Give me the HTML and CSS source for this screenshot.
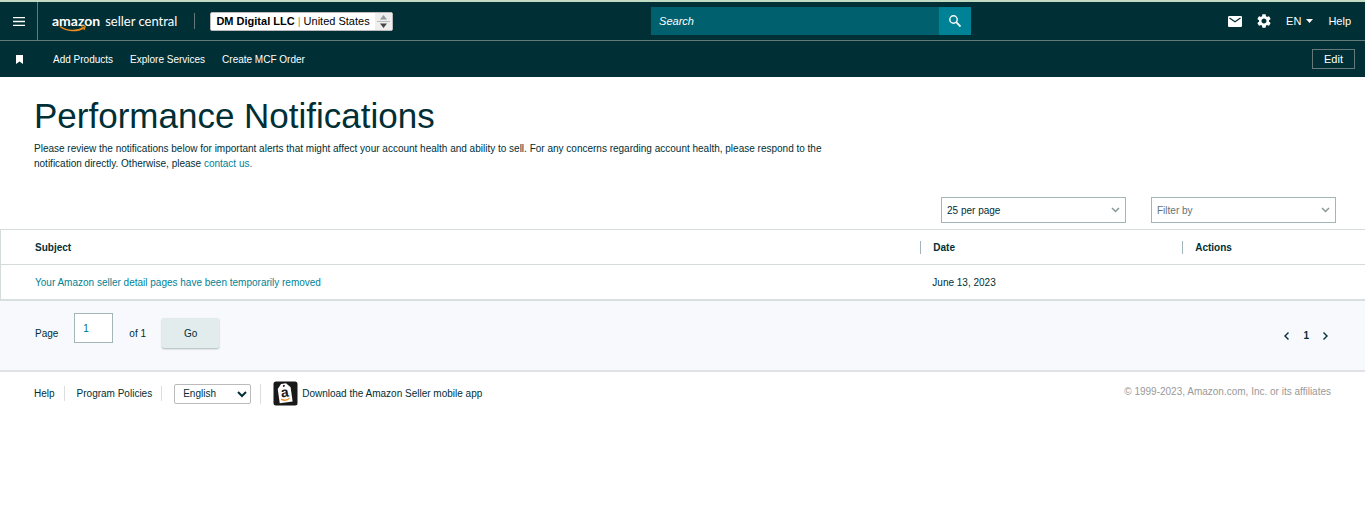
FILE: index.html
```html
<!DOCTYPE html>
<html lang="en">
<head>
  <meta charset="UTF-8">
  <title>Performance Notifications</title>
  <meta name="viewport" content="width=device-width, initial-scale=1.0">
  <link rel="stylesheet" href="styles.css">
</head>
<body>
  <header>
    <div class="topbar">
      <button class="menu-btn" aria-label="Menu">
        <svg width="12" height="9" viewBox="0 0 12 9"><path d="M0 .5h12M0 4.500h12M0 8.500h12" stroke="#fff" stroke-width="1.400"/></svg>
      </button>
      <a class="logo" href="#">
        <b>amazon</b><span>seller central</span>
        <svg class="smile" width="28" height="7" viewBox="0 0 28 7" fill="none" stroke="#f08c1c"><path d="M1 1.500C8 6.500 18 7 25 2.500" stroke-width="1.500"/><path d="M22 1.200c3-.8 4.500-.5 4 .8l-1 3" stroke-width="1.200"/></svg>
      </a>
      <button class="account">
        <span class="account-name"><b>DM Digital LLC</b> <i>|</i> United States</span>
        <span class="account-arrows">
          <svg width="13" height="13" viewBox="0 0 13 13"><path d="M3 4.500 6.500 0 10 4.500z" fill="#999"/><path d="M0 6.500h13" stroke="#bbb"/><path d="M3 8.500h7L6.500 13z" fill="#444"/></svg>
        </span>
      </button>
      <form class="search">
        <input type="text" placeholder="Search" aria-label="Search">
        <button type="button" aria-label="Search">
          <svg width="12" height="12" viewBox="0 0 12 12" fill="none" stroke="#fff"><circle cx="4.500" cy="4.500" r="3.700" stroke-width="1.400"/><path d="M7.200 7.200l4.300 4.300" stroke-width="1.800"/></svg>
        </button>
      </form>
      <nav class="tools">
        <a href="#" aria-label="Messages"><svg width="14" height="11" viewBox="0 0 14 11"><rect width="14" height="11" rx="1.200" fill="#fff"/><path d="M1.500 2 7 5.700 12.500 2" fill="none" stroke="#002f36" stroke-width="1.300"/></svg></a>
        <a href="#" aria-label="Settings"><svg width="14" height="14" viewBox="2 2 20 20"><path fill="#fff" d="M19.140 12.940c.04-.3.060-.61.060-.94 0-.32-.02-.64-.07-.94l2.030-1.580c.18-.14.230-.41.120-.61l-1.920-3.320c-.12-.22-.37-.29-.59-.22l-2.390.96c-.5-.38-1.030-.7-1.620-.94l-.36-2.540c-.04-.24-.24-.41-.48-.41h-3.840c-.24 0-.43.170-.47.410l-.36 2.540c-.59.240-1.130.570-1.620.940l-2.390-.96c-.22-.08-.47 0-.59.220L2.740 8.870c-.12.210-.08.470.120.610l2.030 1.580c-.05.300-.09.630-.09.940s.02.640.070.940l-2.030 1.580c-.18.140-.23.410-.12.610l1.920 3.320c.12.220.370.290.590.220l2.390-.96c.5.380 1.030.700 1.620.940l.36 2.540c.05.240.240.410.480.410h3.840c.24 0 .44-.17.470-.41l.36-2.540c.59-.24 1.130-.56 1.620-.94l2.390.96c.22.080.470 0 .59-.22l1.920-3.320c.12-.22.070-.47-.12-.61l-2.010-1.580zM12 15.600c-1.980 0-3.600-1.620-3.600-3.600s1.620-3.600 3.600-3.600 3.600 1.620 3.600 3.600-1.620 3.600-3.600 3.600z"/></svg></a>
        <a href="#" class="lang">EN <svg width="7" height="4" viewBox="0 0 7 4"><path d="M0 0h7L3.500 4z" fill="#fff"/></svg></a>
        <a href="#">Help</a>
      </nav>
    </div>
    <div class="subbar">
      <svg class="bookmark" width="7" height="9" viewBox="0 0 7 9"><path d="M0 0h7v9L3.500 6.500 0 9z" fill="#fff"/></svg>
      <nav>
        <a href="#">Add Products</a>
        <a href="#">Explore Services</a>
        <a href="#">Create MCF Order</a>
      </nav>
      <button class="edit-btn">Edit</button>
    </div>
  </header>

  <main>
    <div class="intro">
      <h1>Performance Notifications</h1>
      <p>Please review the notifications below for important alerts that might affect your account health and ability to sell. For any concerns regarding account health, please respond to the notification directly. Otherwise, please <a href="#">contact us.</a></p>
    </div>

    <div class="filters">
      <select aria-label="Results per page">
        <option>25 per page</option>
        <option>50 per page</option>
      </select>
      <select class="muted" aria-label="Filter by">
        <option>Filter by</option>
      </select>
    </div>

    <table>
      <thead>
        <tr>
          <th class="col-subject">Subject</th>
          <th class="col-date"><span>Date</span></th>
          <th><span>Actions</span></th>
        </tr>
      </thead>
      <tbody>
        <tr>
          <td><a href="#">Your Amazon seller detail pages have been temporarily removed</a></td>
          <td>June 13, 2023</td>
          <td></td>
        </tr>
      </tbody>
    </table>

    <div class="pager">
      <form class="goto">
        <label for="page">Page</label>
        <input type="text" id="page" value="1">
        <span>of 1</span>
        <button type="button">Go</button>
      </form>
      <nav class="pages">
        <a href="#" aria-label="Previous"><svg width="5" height="8" viewBox="0 0 5 8"><path d="M4.500.5 1 4l3.500 3.500" fill="none" stroke="#002f36" stroke-width="1.400"/></svg></a>
        <b>1</b>
        <a href="#" aria-label="Next"><svg width="5" height="8" viewBox="0 0 5 8"><path d="M.5.5 4 4 .5 7.500" fill="none" stroke="#002f36" stroke-width="1.400"/></svg></a>
      </nav>
    </div>
  </main>

  <footer>
    <a href="#" class="sep">Help</a>
    <a href="#" class="sep">Program Policies</a>
    <div class="sep language">
      <select aria-label="Language">
        <option>English</option>
      </select>
    </div>
    <a href="#" class="app">
      <svg width="25" height="25" viewBox="0 0 25 25">
        <rect x=".5" y=".5" width="24" height="24" rx="2.500" fill="#191919"/>
        <g transform="rotate(-8 12 13)">
          <path d="M9.500 2.500h5l4 4.500v14.500h-13V7z" fill="#fff"/>
          <circle cx="12" cy="4.800" r="1" fill="#191919"/>
          <text class="tag-letter" x="12" y="16" text-anchor="middle">a</text>
          <path d="M7.500 17.500c2.500 2 6 2 8.500.2" fill="none" stroke="#f08c1c" stroke-width="1.300"/>
        </g>
      </svg>
      Download the Amazon Seller mobile app
    </a>
    <span class="copyright">© 1999-2023, Amazon.com, Inc. or its affiliates</span>
  </footer>
</body>
</html>
```

FILE: styles.css
```css
* {
  box-sizing: border-box;
}

body {
  margin: 0;
  font-family: "Liberation Sans", Arial, sans-serif;
  font-size: 10px;
  line-height: 15px;
  color: #002f36;
  background: #fff;
}

a {
  color: inherit;
  text-decoration: none;
}

button, input, select {
  font-family: inherit;
  font-size: inherit;
  color: inherit;
  margin: 0;
}

button {
  cursor: pointer;
}

svg {
  display: block;
}

header {
  background: #002f36;
  border-top: 2px solid #c1dcc3;
  color: #fff;
  font-size: 11px;
}

.topbar {
  display: grid;
  grid-template-columns: 38px auto auto 1fr auto;
  align-items: center;
  height: 39px;
  border-bottom: 1px solid #65797a;
  padding-right: 14px;
}

.menu-btn {
  display: flex;
  align-items: center;
  justify-content: center;
  align-self: stretch;
  background: none;
  border: 0;
  border-right: 1px solid #65797a;
  padding: 0;
}

.logo {
  display: flex;
  align-items: baseline;
  gap: 5px;
  position: relative;
  margin-left: 14px;
  padding-right: 17px;
  border-right: 1px solid #65797a;
  font-family: Lato, sans-serif;
  font-size: 13px;
}

.logo b {
  font-size: 14px;
}

.smile {
  position: absolute;
  left: 7px;
  top: 12px;
}

.account {
  display: flex;
  align-items: stretch;
  height: 19px;
  margin-left: 15px;
  padding: 0;
  border: 1px solid #bbb;
  border-radius: 2px;
  background: #fff;
  color: #000;
  overflow: hidden;
}

.account-name {
  padding: 0 5px;
  line-height: 17px;
}

.account-name b {
  font-weight: bold;
}

.account-name i {
  color: #996;
  font-style: normal;
}

.account-arrows {
  display: flex;
  align-items: center;
  padding: 0 2px;
  background: #eee;
}

.search {
  display: flex;
  justify-self: end;
  width: 320px;
  height: 28px;
  margin-right: 257px;
}

.search input {
  flex: 1;
  min-width: 0;
  border: 0;
  padding: 0 8px;
  background: #00606e;
  color: #fff;
  font-style: italic;
}

.search input::placeholder {
  color: #fff;
}

.search button {
  display: flex;
  align-items: center;
  justify-content: center;
  width: 32px;
  border: 0;
  padding: 0;
  background: #008296;
}

.tools {
  display: flex;
  align-items: center;
  gap: 15px;
}

.lang {
  display: flex;
  align-items: center;
  gap: 5px;
}

.subbar {
  display: flex;
  align-items: center;
  height: 36px;
  padding: 0 10px 0 16px;
  font-size: 10px;
}

.subbar nav {
  display: flex;
  gap: 17px;
  margin-left: 30px;
}

.edit-btn {
  width: 43px;
  height: 20px;
  margin-left: auto;
  padding: 0;
  border: 1px solid #65797a;
  background: none;
  font-size: 11px;
}

.intro {
  padding: 19px 34px 0;
}

h1 {
  margin: 0 0 5px;
  font-size: 35px;
  font-weight: normal;
  line-height: 40px;
}

.intro p {
  max-width: 830px;
  margin: 0;
}

.intro p a,
td a {
  color: #008296;
}

.filters {
  display: flex;
  justify-content: flex-end;
  gap: 25px;
  padding: 26px 29px 6px;
}

.filters select {
  appearance: none;
  width: 185px;
  height: 26px;
  padding: 0 5px;
  border: 1px solid #a2b5b7;
  border-radius: 0;
  background: #fff url("data:image/svg+xml,%3Csvg xmlns='http://www.w3.org/2000/svg' width='9' height='6'%3E%3Cpath d='M1 1l3.500 3.500L8 1' fill='none' stroke='%23899' stroke-width='1.500'/%3E%3C/svg%3E") no-repeat right 5px center;
}

.filters .muted {
  color: #5f7478;
}

table {
  width: 100%;
  table-layout: fixed;
  border-collapse: separate;
  border-spacing: 0;
  border: 1px solid #d5dbdb;
  border-right: 0;
  border-bottom: 2px solid #d9dee1;
}

th, td {
  height: 34px;
  padding: 0 12px;
  text-align: left;
}

th {
  height: 35px;
  border-bottom: 1px solid #d5dbdb;
}

th span {
  display: block;
  margin-left: -12px;
  padding-left: 12px;
  border-left: 1px solid #a2b5b7;
  line-height: 13px;
}

th:first-child,
td:first-child {
  padding-left: 34px;
}

.col-subject {
  width: 67.4%;
}

.col-date {
  width: 19.2%;
}

.pager {
  display: flex;
  align-items: center;
  justify-content: space-between;
  height: 71px;
  padding: 0 37px 0 35px;
  background: #f8f9fc;
  border-bottom: 2px solid #dfe3e6;
}

.goto {
  display: flex;
  align-items: center;
  gap: 16px;
  margin-bottom: 5px;
}

.goto input {
  width: 39px;
  height: 30px;
  margin-bottom: 10px;
  padding: 0 8px;
  border: 1px solid #a2b5b7;
  background: #fff;
  color: #007185;
}

.goto button {
  width: 57px;
  height: 30px;
  border: 0;
  border-radius: 2px;
  background: #e3eced;
  box-shadow: 0 1px 2px #aab7b8;
}

.pages {
  display: flex;
  align-items: center;
  gap: 14px;
}

footer {
  display: flex;
  align-items: center;
  padding: 9px 34px;
}

.sep {
  margin-right: 12px;
  padding-right: 9px;
  border-right: 1px solid #ddd;
}

.language select {
  display: block;
  width: 77px;
  height: 20px;
  padding: 0 4px;
  border: 1px solid #bbb;
  border-radius: 2px;
  background: #fff;
}

.app {
  display: flex;
  align-items: center;
  gap: 4px;
}

.tag-letter {
  font-size: 14px;
  font-weight: bold;
  fill: #191919;
}

.copyright {
  margin-left: auto;
  padding-bottom: 5px;
  color: #999;
}
```
